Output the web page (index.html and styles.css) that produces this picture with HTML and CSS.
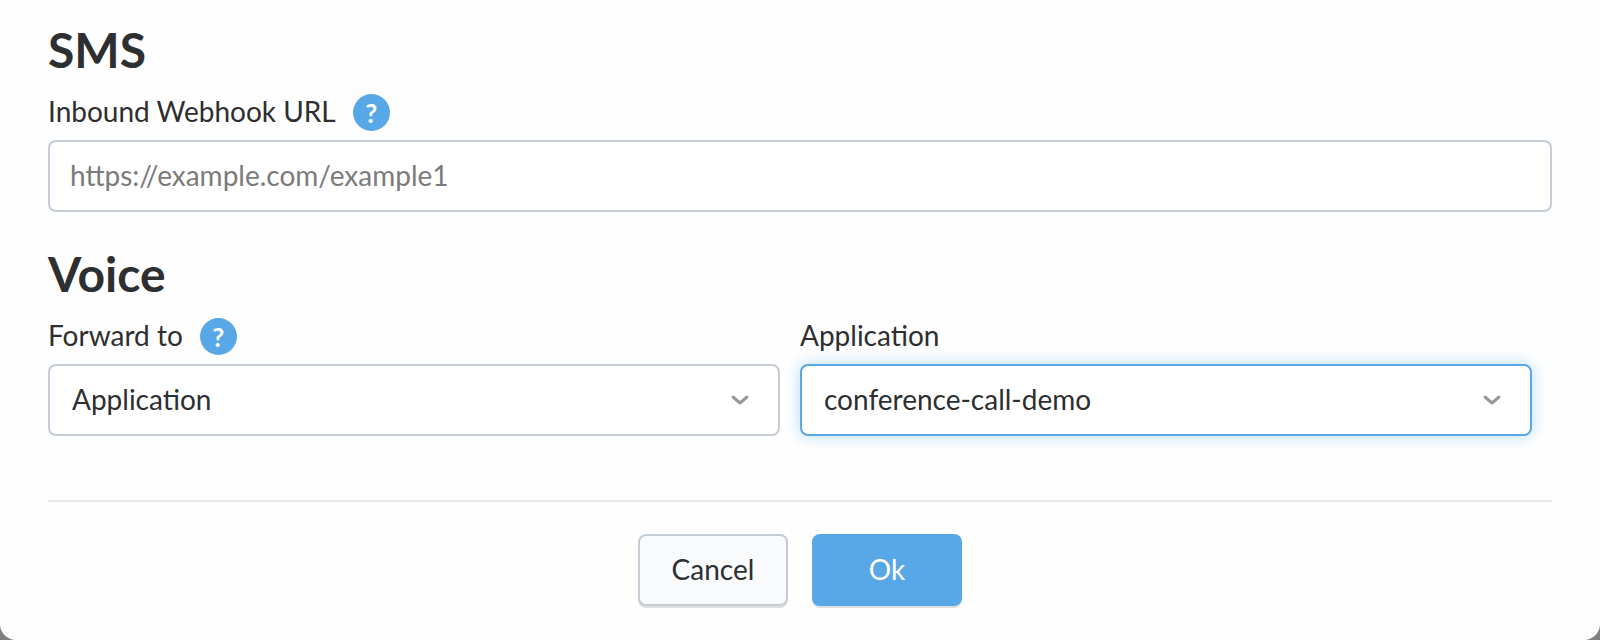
FILE: index.html
```html
<!DOCTYPE html>
<html lang="en">
<head>
    <meta charset="UTF-8">
    <meta name="viewport" content="width=device-width, initial-scale=1.0">
    <title>Number settings</title>
    <link rel="stylesheet" href="styles.css">
</head>
<body>
    <form class="dialog">
        <section class="section">
            <h2>SMS</h2>
            <div class="field">
                <div class="label-row">
                    <label for="webhook">Inbound Webhook URL</label>
                    <button type="button" class="help" aria-label="Help">?</button>
                </div>
                <input type="text" id="webhook" class="control" placeholder="https://example.com/example1">
            </div>
        </section>

        <section class="section">
            <h2>Voice</h2>
            <div class="columns">
                <div class="field">
                    <div class="label-row">
                        <label for="forward">Forward to</label>
                        <button type="button" class="help" aria-label="Help">?</button>
                    </div>
                    <div class="select">
                        <select id="forward" class="control">
                            <option>Application</option>
                        </select>
                        <svg class="chevron" viewBox="0 0 20 12"><path d="M3 3l7 6 7-6"/></svg>
                    </div>
                </div>
                <div class="field">
                    <div class="label-row">
                        <label for="application">Application</label>
                    </div>
                    <div class="select">
                        <select id="application" class="control active">
                            <option>conference-call-demo</option>
                        </select>
                        <svg class="chevron" viewBox="0 0 20 12"><path d="M3 3l7 6 7-6"/></svg>
                    </div>
                </div>
            </div>
        </section>

        <div class="actions">
            <button type="button" class="btn">Cancel</button>
            <button type="submit" class="btn primary">Ok</button>
        </div>
    </form>
</body>
</html>
```

FILE: styles.css
```css
* {
    box-sizing: border-box;
}
body {
    margin: 0;
    background-color: #7f7f7f;
    font-family: Lato, sans-serif;
    font-size: 28px;
    line-height: 34px;
    color: #2d2f31;
}
.dialog {
    padding: 22px 48px 34px;
    background-color: #fefefe;
    border-radius: 0 0 16px 16px;
}
.section {
    margin-bottom: 34px;
}
h2 {
    margin: 0 0 16px;
    font-size: 48px;
    line-height: 56px;
    font-weight: bold;
}
.label-row {
    display: flex;
    align-items: flex-start;
    gap: 17px;
    height: 36px;
    margin-bottom: 10px;
}
.help {
    width: 37px;
    height: 37px;
    padding: 0;
    border: none;
    border-radius: 50%;
    background-color: #58a8e8;
    color: white;
    font: bold 26px/36px Lato, sans-serif;
}
.control {
    display: block;
    width: 100%;
    height: 72px;
    padding: 0 20px 2px;
    border: 2px solid #c4ccd5;
    border-radius: 8px;
    background-color: white;
    font: inherit;
    color: inherit;
}
.control::placeholder {
    color: #7b7b7b;
}
.columns {
    display: grid;
    grid-template-columns: 1fr 1fr;
    gap: 20px;
    padding-right: 20px;
}
.select {
    position: relative;
}
select.control {
    appearance: none;
    padding: 0 22px 2px;
}
.chevron {
    position: absolute;
    top: 30px;
    right: 30px;
    width: 20px;
    height: 12px;
    fill: none;
    stroke: #999;
    stroke-width: 3;
    stroke-linecap: round;
    stroke-linejoin: round;
    pointer-events: none;
}
.control.active {
    border-color: #58a8e8;
    box-shadow: 0 0 16px #b5dcf8;
}
.actions {
    display: flex;
    justify-content: center;
    gap: 24px;
    margin-top: 64px;
    padding-top: 32px;
    border-top: 2px solid #e6eaee;
}
.btn {
    width: 150px;
    height: 72px;
    padding: 0 0 2px;
    border: 2px solid #c4ccd5;
    border-radius: 8px;
    background-color: #f9fafc;
    box-shadow: 0 2px 0 #dcdee0;
    font: inherit;
    color: inherit;
}
.btn.primary {
    border-color: #58a8e8;
    background-color: #58a8e8;
    color: white;
}
```
